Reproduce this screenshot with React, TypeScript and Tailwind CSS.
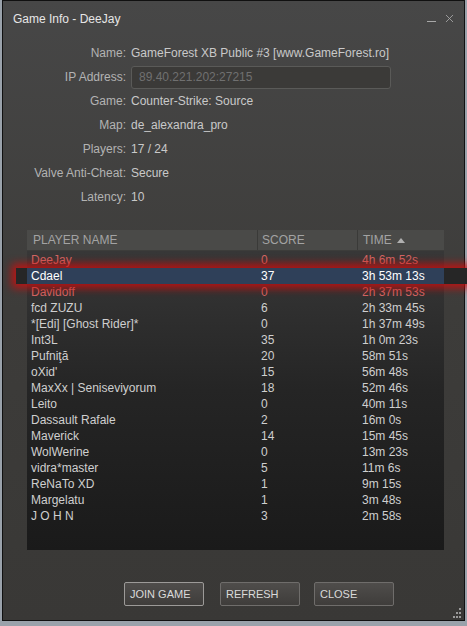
import { X } from 'lucide-react';

type Player = { name: string; score: number; time: string; tone?: 'red' | 'sel' };

const players: Player[] = [
  { name: 'DeeJay', score: 0, time: '4h 6m 52s', tone: 'red' },
  { name: 'Cdael', score: 37, time: '3h 53m 13s', tone: 'sel' },
  { name: 'Davidoff', score: 0, time: '2h 37m 53s', tone: 'red' },
  { name: 'fcd ZUZU', score: 6, time: '2h 33m 45s' },
  { name: '*[Edi] [Ghost Rider]*', score: 0, time: '1h 37m 49s' },
  { name: 'Int3L', score: 35, time: '1h 0m 23s' },
  { name: 'Pufniţă', score: 20, time: '58m 51s' },
  { name: "oXid'", score: 15, time: '56m 48s' },
  { name: 'MaxXx | Seniseviyorum', score: 18, time: '52m 46s' },
  { name: 'Leito', score: 0, time: '40m 11s' },
  { name: 'Dassault Rafale', score: 2, time: '16m 0s' },
  { name: 'Maverick', score: 14, time: '15m 45s' },
  { name: 'WolWerine', score: 0, time: '13m 23s' },
  { name: 'vidra*master', score: 5, time: '11m 6s' },
  { name: 'ReNaTo XD', score: 1, time: '9m 15s' },
  { name: 'Margelatu', score: 1, time: '3m 48s' },
  { name: 'J O H N', score: 3, time: '2m 58s' },
];

const info: [string, string][] = [
  ['Name:', 'GameForest XB Public #3 [www.GameForest.ro]'],
  ['IP Address:', '89.40.221.202:27215'],
  ['Game:', 'Counter-Strike: Source'],
  ['Map:', 'de_alexandra_pro'],
  ['Players:', '17 / 24'],
  ['Valve Anti-Cheat:', 'Secure'],
  ['Latency:', '10'],
];

function PlayerRow({ p }: { p: Player }) {
  const color =
    p.tone === 'red' ? 'text-[#d26664]' : p.tone === 'sel' ? 'text-white' : 'text-[#cfcfcf]';
  const cells = (
    <>
      <span className="w-[230px] pl-[4px] truncate">{p.name}</span>
      <span className="w-[100px] pl-[4px]">{p.score}</span>
      <span className="flex-1 pl-[5px]">{p.time}</span>
    </>
  );
  if (p.tone === 'sel') {
    return (
      <div className="relative h-[16px]">
        <div className="absolute inset-y-0 left-[-11px] right-[-26px] bg-[#262626] shadow-[0_0_9px_4px_rgba(210,12,12,0.85)]" />
        <div className={`relative flex h-[16px] items-center bg-[#2f4059] ${color}`}>{cells}</div>
      </div>
    );
  }
  return <div className={`flex h-[16px] items-center ${color}`}>{cells}</div>;
}

export default function App() {
  return (
    <div className="w-[467px] h-[626px] bg-[#9aa2ab] overflow-hidden" style={{ fontFamily: '"Liberation Sans", Arial, sans-serif' }}>
      <div className="ml-[2px] w-[463px] h-[621px] border border-[#101010] bg-gradient-to-b from-[#474747] via-[#3d3c3a] to-[#393836] flex flex-col text-[12px]">
        {/* title bar */}
        <div className="flex h-[35px] items-center pl-[10px] pr-[8px] text-[#e6e6e6]">
          <span className="flex-1">Game Info - DeeJay</span>
          <span className="mt-[6px] mr-[7px] h-[1px] w-[9px] bg-[#a8a8a8]" />
          <X size={13} strokeWidth={1.6} className="text-[#a8a8a8]" />
        </div>

        {/* info */}
        <div className="flex flex-col pt-[5px]">
          {info.map(([label, value]) => (
            <div key={label} className="flex h-[24px] items-center">
              <span className="w-[123px] text-right text-[#b3b3b3]">{label}</span>
              {label === 'IP Address:' ? (
                <div className="ml-[5px] flex h-[23px] w-[260px] items-center rounded-[3px] border border-[#5a5a58] bg-[#3b3a38] pl-[7px] text-[#707070]">
                  {value}
                </div>
              ) : (
                <span className="ml-[5px] text-[#c9c9c9]">{value}</span>
              )}
            </div>
          ))}
        </div>

        {/* player list */}
        <div className="mt-[21px] ml-[24px] w-[417px] h-[320px] flex flex-col bg-gradient-to-b from-[#3a3a3a] via-[#252525] to-[#1a1a1a]">
          <div className="flex h-[21px] items-center bg-[#4a4a48] text-[#a3a3a3] border-b border-[#3c3c3a]">
            <span className="w-[230px] pl-[6px]">PLAYER NAME</span>
            <span className="h-full w-[100px] border-l border-[#3a3a38] pl-[4px] flex items-center">SCORE</span>
            <span className="h-full flex-1 border-l border-[#3a3a38] pl-[5px] flex items-center gap-[5px]">
              TIME
              <svg width="8" height="5" viewBox="0 0 8 5"><path d="M0 5 L4 0 L8 5 Z" fill="#b0b0b0" /></svg>
            </span>
          </div>
          <div className="flex flex-col pt-[1px]">
            {players.map((p) => (
              <PlayerRow key={p.name} p={p} />
            ))}
          </div>
        </div>

        {/* buttons */}
        <div className="mt-[32px] flex pl-[121px] gap-[16px] text-[11px] text-[#dadada]">
          <button className="h-[24px] w-[80px] rounded-[2px] border border-[#9c9a98] bg-gradient-to-b from-[#4f4d4b] to-[#3f3d3b] pl-[5px] text-left">JOIN GAME</button>
          <button className="h-[24px] w-[80px] rounded-[2px] border border-[#6f6d6b] bg-gradient-to-b from-[#4f4d4b] to-[#3f3d3b] pl-[5px] text-left">REFRESH</button>
          <button className="ml-[-2px] h-[24px] w-[80px] rounded-[2px] border border-[#6f6d6b] bg-gradient-to-b from-[#4f4d4b] to-[#3f3d3b] pl-[5px] text-left">CLOSE</button>
        </div>

        {/* resize grip */}
        <div className="mt-auto mb-[2px] mr-[2px] self-end">
          <svg width="10" height="10" viewBox="0 0 10 10" fill="#9a9a9a">
            <rect x="7" y="0" width="2" height="2" />
            <rect x="4" y="4" width="2" height="2" />
            <rect x="7" y="4" width="2" height="2" />
            <rect x="1" y="8" width="2" height="2" />
            <rect x="4" y="8" width="2" height="2" />
            <rect x="7" y="8" width="2" height="2" />
          </svg>
        </div>
      </div>
    </div>
  );
}
